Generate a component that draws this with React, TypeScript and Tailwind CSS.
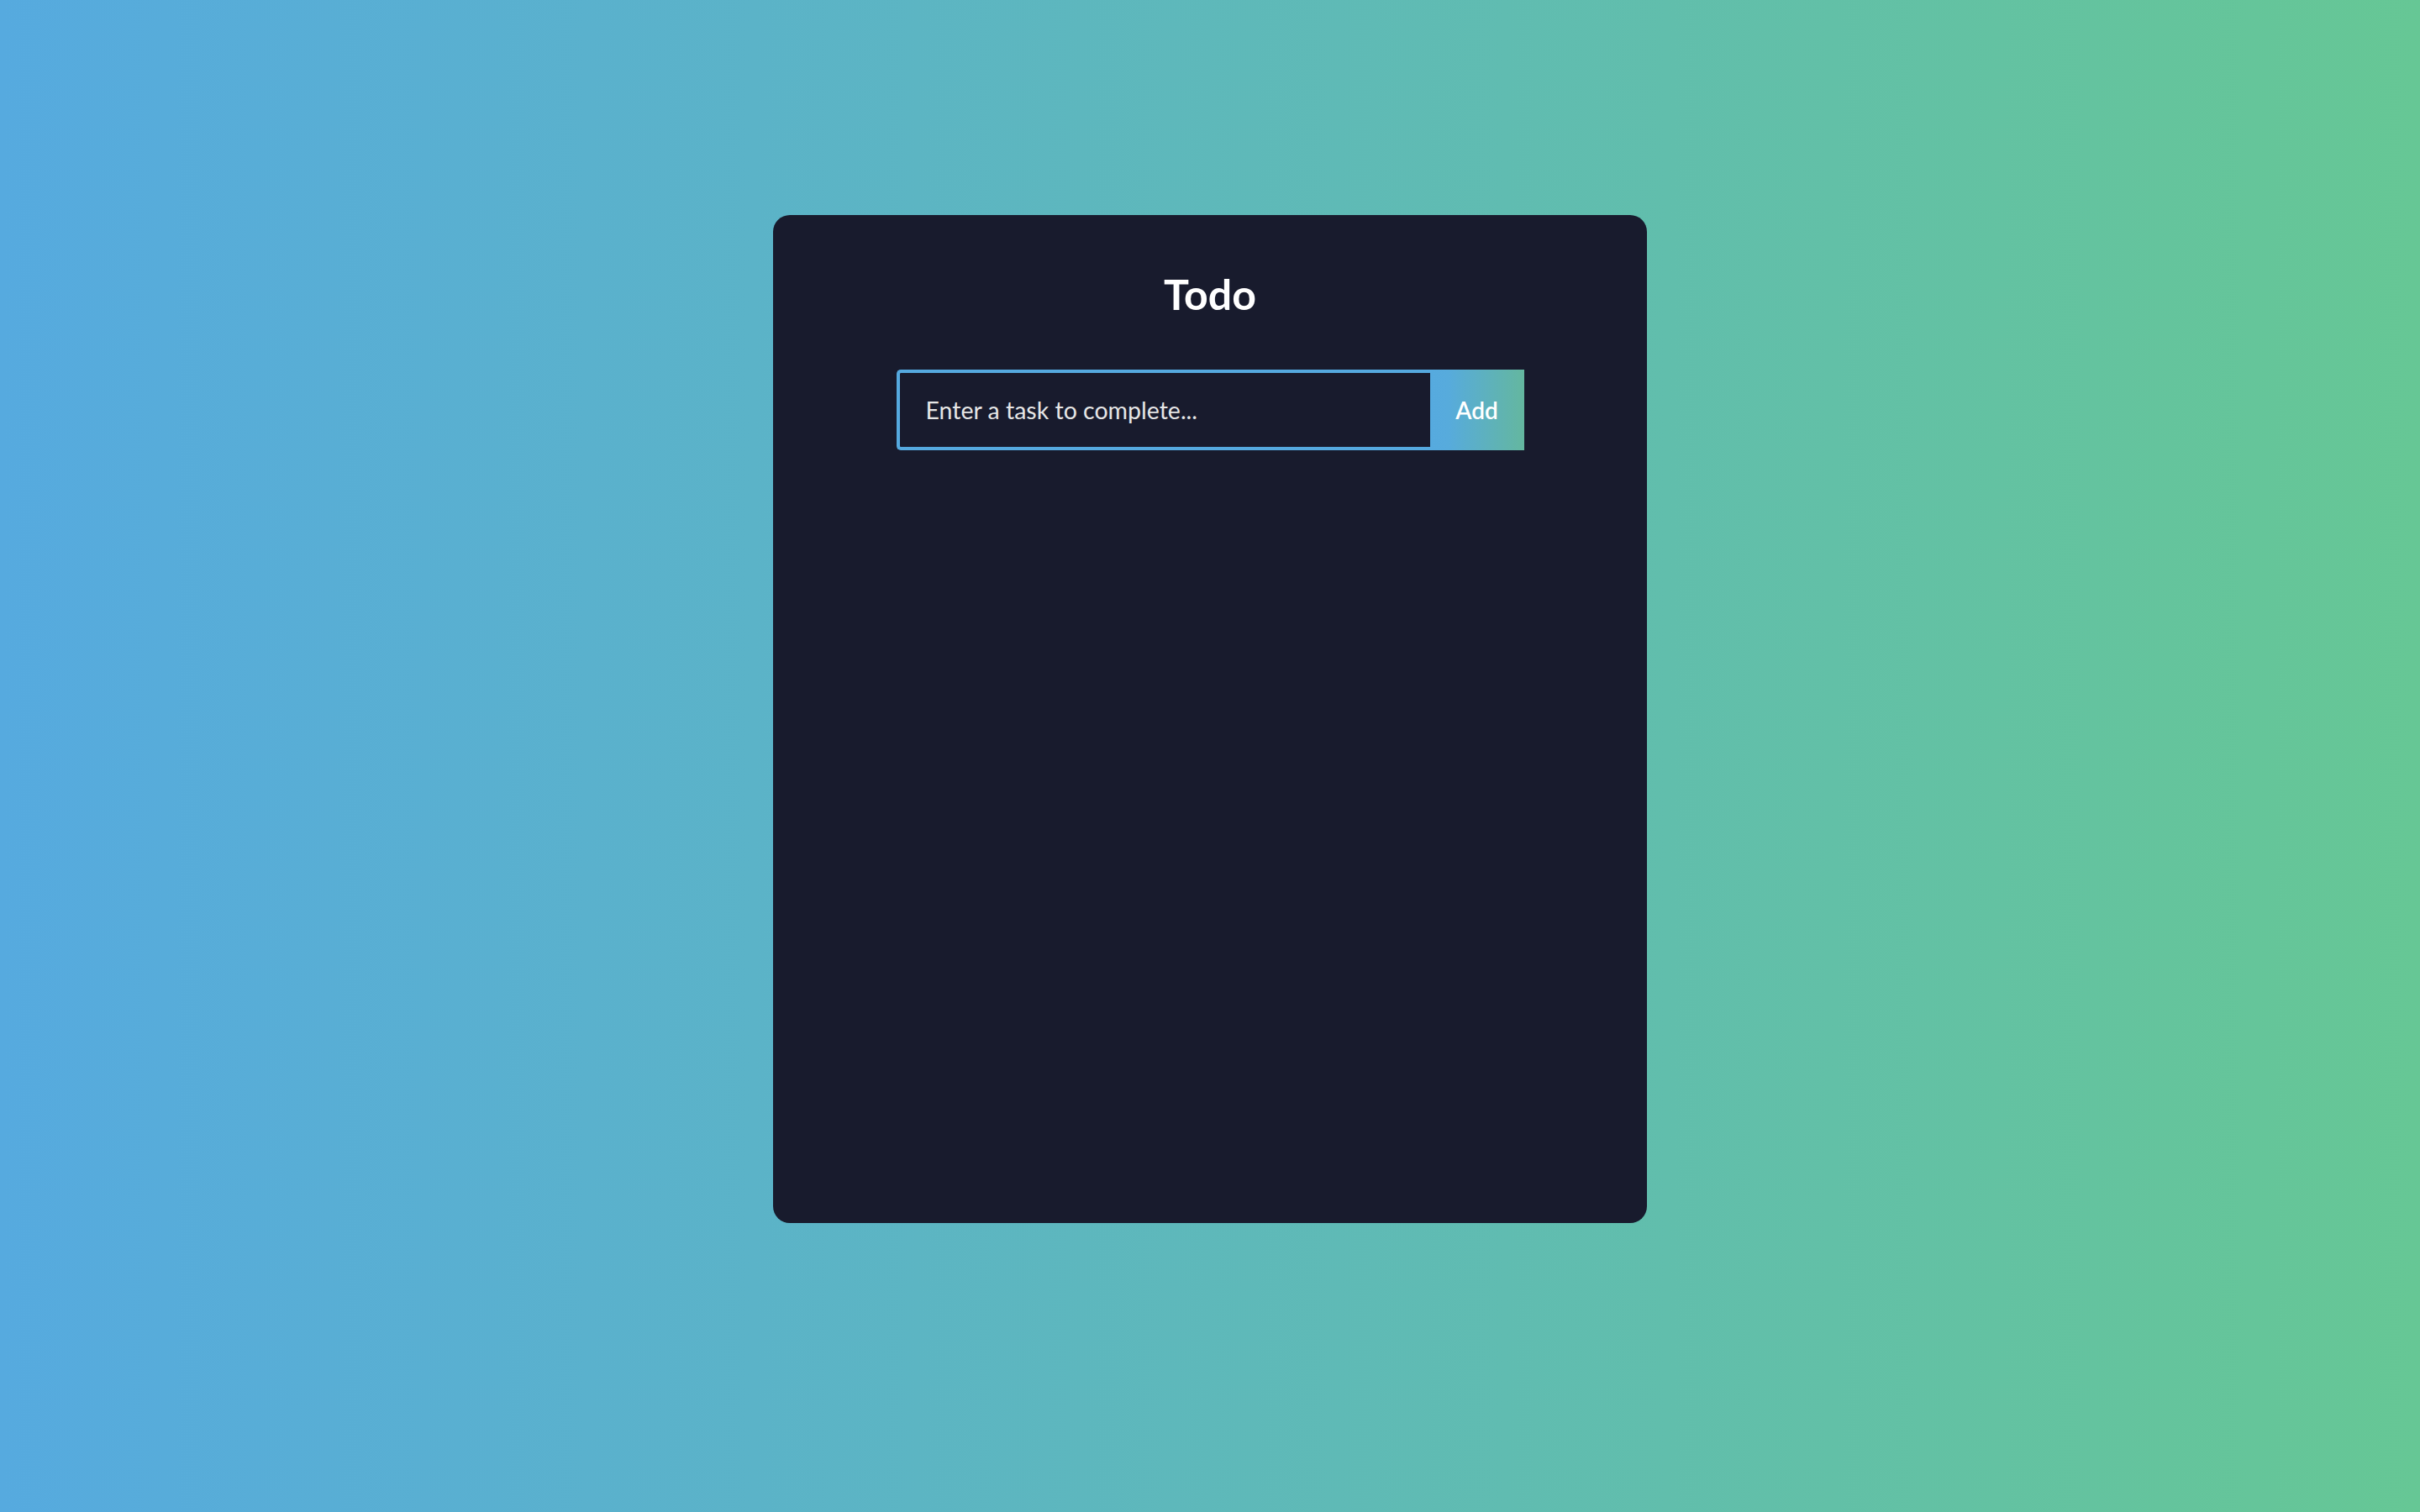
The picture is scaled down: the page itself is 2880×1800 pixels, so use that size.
import React from "react";

export default function App() {
  return (
    <div
      className="min-h-screen w-full flex justify-center pt-[256px] bg-[linear-gradient(90deg,#56aadf_0%,#66c795_100%)]"
      style={{ fontFamily: "Lato, 'Open Sans', sans-serif" }}
    >
      <div className="w-[1040px] h-[1200px] rounded-[20px] bg-[#181b2d] flex flex-col items-center">
        <h1 className="pt-[64px] text-[50px] leading-[60px] font-bold text-white">Todo</h1>
        <form
          className="mt-[60px] flex w-[747px] h-[96px]"
          onSubmit={(e) => e.preventDefault()}
        >
          <input
            type="text"
            placeholder="Enter a task to complete..."
            className="flex-1 min-w-0 h-full bg-[#181b2d] border-4 border-r-0 border-[#55a9df] rounded-l-[5px] pl-[31px] text-[28.5px] text-white placeholder:text-[#e6e6e6] outline-none"
          />
          <button
            type="submit"
            className="w-[112px] h-full bg-[linear-gradient(90deg,#56aadf_0%,#57abdc_20%,#64b79f_100%)] text-white text-[28px] font-semibold"
          >
            Add
          </button>
        </form>
      </div>
    </div>
  );
}
